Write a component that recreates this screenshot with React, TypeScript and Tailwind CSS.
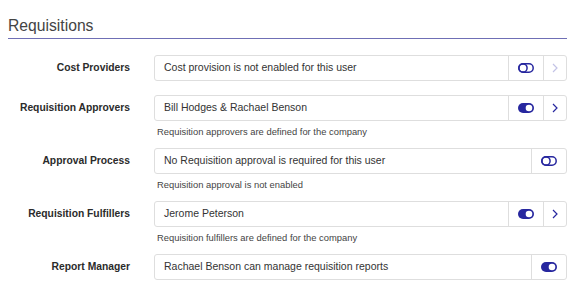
import React from 'react'

interface RowProps {
  label: string
  value: string
  on: boolean
  chevron?: 'active' | 'disabled'
  help?: string
}

function Toggle({ on }: { on: boolean }) {
  if (on) {
    return (
      <svg width="16" height="10" viewBox="0 0 16 10">
        <rect x="0" y="0" width="16" height="10" rx="5" fill="#27279f" />
        <circle cx="11" cy="5" r="3.3" fill="#ffffff" />
      </svg>
    )
  }
  return (
    <svg width="16" height="10" viewBox="0 0 16 10">
      <rect x="0.8" y="0.8" width="14.4" height="8.4" rx="4.2" fill="none" stroke="#27279f" strokeWidth="1.5" />
      <circle cx="5" cy="5" r="4.1" fill="none" stroke="#27279f" strokeWidth="1.5" />
    </svg>
  )
}

function Chevron({ disabled }: { disabled: boolean }) {
  return (
    <svg width="6" height="10" viewBox="0 0 6 10">
      <path d="M1 1 L5 5 L1 9" fill="none" stroke={disabled ? '#c3c3e6' : '#27279f'} strokeWidth="1.2" />
    </svg>
  )
}

function Row({ label, value, on, chevron, help }: RowProps) {
  return (
    <div className={help ? 'mb-[10px]' : 'mb-[14px]'}>
      <div className="flex items-center">
        <div className="w-[122px] text-right text-[10.3px] font-bold text-[#2b2b2b]">{label}</div>
        <div className="ml-[24px] flex h-[26px] flex-1 rounded-[3px] border border-[#dedede] bg-white">
          <div className="flex flex-1 items-center pl-[9px] text-[10.5px] text-[#333]">{value}</div>
          <div className="flex w-[35px] items-center justify-center border-l border-[#dedede]">
            <Toggle on={on} />
          </div>
          {chevron && (
            <div className="flex w-[23px] items-center justify-center border-l border-[#dedede]">
              <Chevron disabled={chevron === 'disabled'} />
            </div>
          )}
        </div>
      </div>
      {help && (
        <div className="ml-[149px] mt-[5px] text-[9.4px] leading-[12px] text-[#444]">{help}</div>
      )}
    </div>
  )
}

export default function App() {
  return (
    <div
      className="h-[293px] w-[576px] bg-white pl-[8px] pr-[9px]"
      style={{ fontFamily: '"Liberation Sans", Arial, sans-serif' }}
    >
      <div className="border-b border-[#6f6fb5] pb-[2px] pt-[16px] text-[15.7px] leading-[20px] text-[#444]">
        Requisitions
      </div>
      <div className="pt-[16px]">
        <Row label="Cost Providers" value="Cost provision is not enabled for this user" on={false} chevron="disabled" />
        <Row
          label="Requisition Approvers"
          value="Bill Hodges & Rachael Benson"
          on={true}
          chevron="active"
          help="Requisition approvers are defined for the company"
        />
        <Row
          label="Approval Process"
          value="No Requisition approval is required for this user"
          on={false}
          help="Requisition approval is not enabled"
        />
        <Row
          label="Requisition Fulfillers"
          value="Jerome Peterson"
          on={true}
          chevron="active"
          help="Requisition fulfillers are defined for the company"
        />
        <Row label="Report Manager" value="Rachael Benson can manage requisition reports" on={true} />
      </div>
    </div>
  )
}
